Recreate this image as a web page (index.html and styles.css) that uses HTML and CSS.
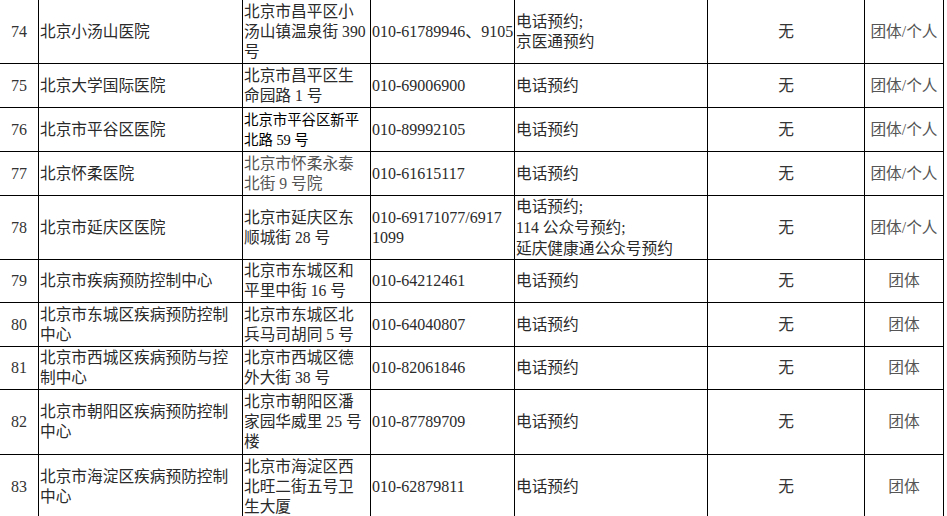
FILE: index.html
```html
<!DOCTYPE html>
<html lang="zh-CN">
<head>
<meta charset="utf-8">
<title>北京市医疗机构预约列表</title>
<link rel="stylesheet" href="styles.css">
</head>
<body>
<table class="list">
  <colgroup>
    <col class="c-no"><col class="c-name"><col class="c-addr"><col class="c-tel"><col class="c-way"><col class="c-fee"><col class="c-type">
  </colgroup>
  <tbody>
    <tr class="r64">
      <td class="no">74</td><td class="txt">北京小汤山医院</td>
      <td class="txt">北京市昌平区小<br>汤山镇温泉街 390<br>号</td>
      <td class="txt tel">010-61789946、9105</td>
      <td class="txt">电话预约;<br>京医通预约</td>
      <td class="mid">无</td><td class="mid type">团体/个人</td>
    </tr>
    <tr class="r44">
      <td class="no">75</td><td class="txt">北京大学国际医院</td>
      <td class="txt">北京市昌平区生<br>命园路 1 号</td>
      <td class="txt tel">010-69006900</td>
      <td class="txt">电话预约</td>
      <td class="mid">无</td><td class="mid type">团体/个人</td>
    </tr>
    <tr class="r44">
      <td class="no">76</td><td class="txt">北京市平谷区医院</td>
      <td class="txt alt">北京市平谷区新平<br>北路 59 号</td>
      <td class="txt tel">010-89992105</td>
      <td class="txt">电话预约</td>
      <td class="mid">无</td><td class="mid type">团体/个人</td>
    </tr>
    <tr class="r44">
      <td class="no">77</td><td class="txt">北京怀柔医院</td>
      <td class="txt light">北京市怀柔永泰<br>北街 9 号院</td>
      <td class="txt tel">010-61615117</td>
      <td class="txt">电话预约</td>
      <td class="mid">无</td><td class="mid type">团体/个人</td>
    </tr>
    <tr class="r64">
      <td class="no">78</td><td class="txt">北京市延庆区医院</td>
      <td class="txt">北京市延庆区东<br>顺城街 28 号</td>
      <td class="txt tel">010-69171077/6917<br>1099</td>
      <td class="txt way3">电话预约;<br>114 公众号预约;<br>延庆健康通公众号预约</td>
      <td class="mid">无</td><td class="mid type">团体/个人</td>
    </tr>
    <tr class="r43">
      <td class="no">79</td><td class="txt">北京市疾病预防控制中心</td>
      <td class="txt">北京市东城区和<br>平里中街 16 号</td>
      <td class="txt tel">010-64212461</td>
      <td class="txt">电话预约</td>
      <td class="mid">无</td><td class="mid type">团体</td>
    </tr>
    <tr class="r44">
      <td class="no">80</td><td class="txt">北京市东城区疾病预防控制<br>中心</td>
      <td class="txt">北京市东城区北<br>兵马司胡同 5 号</td>
      <td class="txt tel">010-64040807</td>
      <td class="txt">电话预约</td>
      <td class="mid">无</td><td class="mid type">团体</td>
    </tr>
    <tr class="r43">
      <td class="no">81</td><td class="txt">北京市西城区疾病预防与控<br>制中心</td>
      <td class="txt">北京市西城区德<br>外大街 38 号</td>
      <td class="txt tel">010-82061846</td>
      <td class="txt">电话预约</td>
      <td class="mid">无</td><td class="mid type">团体</td>
    </tr>
    <tr class="r65">
      <td class="no">82</td><td class="txt">北京市朝阳区疾病预防控制<br>中心</td>
      <td class="txt">北京市朝阳区潘<br>家园华威里 25 号<br>楼</td>
      <td class="txt tel">010-87789709</td>
      <td class="txt">电话预约</td>
      <td class="mid">无</td><td class="mid type">团体</td>
    </tr>
    <tr class="r65">
      <td class="no">83</td><td class="txt">北京市海淀区疾病预防控制<br>中心</td>
      <td class="txt">北京市海淀区西<br>北旺二街五号卫<br>生大厦</td>
      <td class="txt tel">010-62879811</td>
      <td class="txt">电话预约</td>
      <td class="mid">无</td><td class="mid type">团体</td>
    </tr>
  </tbody>
</table>
</body>
</html>
```

FILE: styles.css
```css
html, body {
  margin: 0;
  padding: 0;
  background: #fff;
  overflow: hidden;
}

.list {
  margin: -1px 0 0 -1px;
  width: 944px;
  table-layout: fixed;
  border-collapse: collapse;
  font-family: "Liberation Serif", "Noto Sans CJK SC", serif;
  font-size: 15.7px;
  line-height: 20px;
  color: #2a2a2a;
}

.c-no { width: 39px; }
.c-name { width: 204px; }
.c-addr { width: 128px; }
.c-tel { width: 144px; }
.c-way { width: 193px; }
.c-fee { width: 157px; }
.c-type { width: 79px; }

.list td {
  border: 1px solid #000;
  padding: 0 1px;
  vertical-align: middle;
  white-space: nowrap;
  overflow: hidden;
}

.r64 td { height: 63px; }
.r44 td { height: 43px; }
.r43 td { height: 42px; }
.r65 td { height: 64px; }

.no {
  text-align: center;
  color: #333;
  font-size: 16px;
}

.txt {
  text-align: left;
}

.tel {
  font-size: 16px;
}

.mid {
  text-align: center;
  color: #333;
}

.type {
  color: #555;
  padding: 0;
}

.alt {
  font-size: 14.4px;
  color: #000;
}

.light {
  color: #555;
}

.way3 {
  line-height: 21px;
}
```
